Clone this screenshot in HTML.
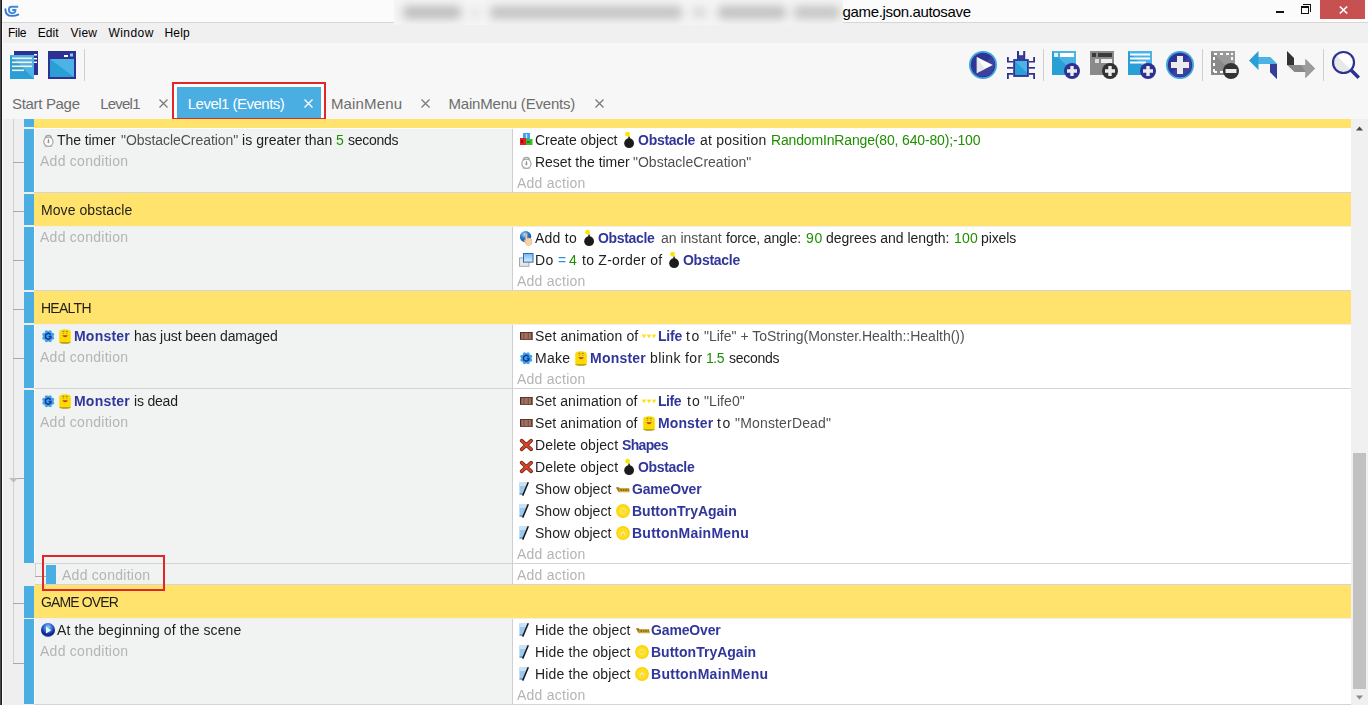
<!DOCTYPE html>
<html><head><meta charset="utf-8">
<style>
*{margin:0;padding:0;box-sizing:border-box}
html,body{width:1368px;height:705px;overflow:hidden;background:#f7f7f7;font-family:"Liberation Sans",sans-serif}
.a{position:absolute}
.t{position:absolute;white-space:pre;line-height:1;font-family:"Liberation Sans",sans-serif}
svg{position:absolute;overflow:visible}
.g{will-change:transform}
</style></head><body>
<!-- title bar -->
<div class="a" style="left:0;top:0;width:1368px;height:22px;background:#fbfbfb"></div>
<div class="a" style="left:0;top:22px;width:1368px;height:1px;background:#d6d6d6"></div>
<div class="a" style="left:0;top:23px;width:1368px;height:20px;background:#f0f0f0"></div>
<!-- blurred title region -->
<div class="a" style="left:394px;top:0;width:449px;height:25px;background:#f5f5f5;overflow:hidden">
  <div class="a" style="left:0;top:0;width:449px;height:25px;filter:blur(5px)">
    <div class="a" style="left:9px;top:6px;width:58px;height:13px;background:#bdbdbd;border-radius:4px"></div>
    <div class="a" style="left:78px;top:9px;width:6px;height:8px;background:#d6d6d6"></div>
    <div class="a" style="left:96px;top:6px;width:192px;height:13px;background:#c2c2c2;border-radius:4px"></div>
    <div class="a" style="left:299px;top:8px;width:13px;height:9px;background:#d2d2d2"></div>
    <div class="a" style="left:324px;top:6px;width:68px;height:13px;background:#c0c0c0;border-radius:4px"></div>
    <div class="a" style="left:400px;top:6px;width:46px;height:13px;background:#c4c4c4;border-radius:4px"></div>
  </div>
</div>
<!-- app logo -->
<svg style="left:0px;top:0px" width="24" height="22" viewBox="0 0 24 22">
  <path d="M18.2 6.7 H11.6 C9.6 6.7 8.9 8.2 8.9 9.8 C8.9 12 10.4 13.2 12.4 13.2 C14.4 13.2 15.4 11.8 15.5 10 H12.2" fill="none" stroke="#3f8ad8" stroke-width="1.9"/>
  <path d="M5.4 9.2 C5.4 13.2 7.8 15.9 12 15.9 C14.6 15.9 16.6 15.4 18.2 14.6" fill="none" stroke="#3478d0" stroke-width="1.9" stroke-linecap="round"/>
</svg>
<!-- window controls -->
<div class="a" style="left:1276px;top:11px;width:8px;height:2px;background:#111"></div>
<div class="a" style="left:1301px;top:6px;width:8px;height:8px;border:1px solid #111;border-top-width:2px"></div>
<div class="a" style="left:1303px;top:4px;width:8px;height:8px;border-top:1px solid #111;border-right:1px solid #111"></div>
<div class="a" style="left:1320px;top:0;width:45px;height:19px;background:#c75050"></div>
<svg style="left:1339px;top:6px" width="9" height="8" viewBox="0 0 9 8"><path d="M0.8 0.5 L8.2 7.5 M8.2 0.5 L0.8 7.5" stroke="#fff" stroke-width="1.7"/></svg>

<!-- toolbar left -->
<svg style="left:10px;top:51px" width="28" height="28" viewBox="0 0 28 28">
  <rect x="4" y="0" width="24" height="24" fill="#2e3192"/>
  <rect x="24" y="3" width="3" height="1.5" fill="#fff"/><rect x="24" y="7" width="3" height="1.5" fill="#fff"/><rect x="24" y="10.5" width="3" height="1.5" fill="#fff"/>
  <rect x="0" y="4" width="24" height="24" fill="#2a9fd6"/>
  <path d="M0 4 H24 V28 Z" fill="#4bb3e6"/>
  <rect x="2" y="6.5" width="20" height="1.6" fill="#fbefe6"/>
  <rect x="2" y="10.5" width="20" height="1.6" fill="#fbefe6"/>
  <rect x="2" y="14.5" width="20" height="1.6" fill="#fbefe6"/>
  <rect x="2" y="18.5" width="12" height="1.6" fill="#fbefe6"/>
</svg>
<svg style="left:48px;top:51px" width="28" height="28" viewBox="0 0 28 28">
  <rect x="0" y="0" width="28" height="28" fill="#2e3192"/>
  <rect x="2" y="8" width="24" height="18" fill="#2a9fd6"/>
  <path d="M2 8 H26 V26 Z" fill="#4bb3e6"/>
  <rect x="16" y="4" width="4" height="2" fill="#fff"/>
  <rect x="22" y="2.5" width="3" height="3" fill="#7fd0f5"/>
</svg>
<div class="a" style="left:84px;top:49px;width:1px;height:32px;background:#cfcfcf"></div>

<!-- toolbar right -->
<svg style="left:969px;top:51px" width="28" height="28" viewBox="0 0 28 28">
  <circle cx="14" cy="14" r="14" fill="#3ca7de"/>
  <circle cx="14" cy="14" r="12.2" fill="#2f3593"/>
  <path d="M22.6 5.4 A12.2 12.2 0 0 1 5.4 22.6 Z" fill="#3d41a0"/>
  <path d="M7.8 5.9 L23.8 14 L7.8 22.1 Z" fill="#fdfdfd"/>
  <path d="M7.8 5.9 L15.8 18 L7.8 22.1 Z" fill="#e4e5e5"/>
</svg>
<svg style="left:1007px;top:51px" width="28" height="28" viewBox="0 0 28 28">
  <path d="M10 0 H12 V4.2 H16.2 V0 H18.2 V8.2 H10 Z" fill="#2e3192"/>
  <rect x="11.6" y="5.4" width="5" height="3" fill="#3b3f9e"/>
  <rect x="6.2" y="8.1" width="15.6" height="17.8" fill="#2e3192"/>
  <rect x="8" y="9.9" width="12" height="14.2" fill="#2a9fd6"/>
  <path d="M8 9.9 H20 V22 Z" fill="#4bb3e6"/>
  <path d="M0 5.9 V11.6 H6.2 V10 H1.8 V5.9 Z M28 5.9 V11.6 H21.8 V10 H26.2 V5.9 Z" fill="#2e3192"/>
  <rect x="0" y="16" width="6.2" height="1.7" fill="#2e3192"/><rect x="21.8" y="16" width="6.2" height="1.7" fill="#2e3192"/>
  <path d="M0 28 V22 H6.2 V23.8 H1.8 V28 Z M28 28 V22 H21.8 V23.8 H26.2 V28 Z" fill="#2e3192"/>
</svg>
<div class="a" style="left:1043px;top:49px;width:1px;height:32px;background:#cfcfcf"></div>
<svg style="left:1052px;top:51px" width="28" height="28" viewBox="0 0 28 28">
  <rect x="0" y="0" width="24" height="24" fill="#2a9fd6"/>
  <path d="M0 0 H24 V24 Z" fill="#4bb3e6"/>
  <rect x="8" y="2" width="14" height="4" fill="#fff"/>
  <rect x="2" y="2" width="4" height="4" fill="#e0f2fb"/>
  <circle cx="20" cy="20" r="8" fill="#2e3192"/>
  <path d="M18.3 15 H21.7 V18.3 H25 V21.7 H21.7 V25 H18.3 V21.7 H15 V18.3 H18.3 Z" fill="#ececec"/>
</svg>
<svg style="left:1090px;top:51px" width="28" height="28" viewBox="0 0 28 28">
  <rect x="0" y="0" width="24" height="24" fill="#8a8a8a"/>
  <rect x="8" y="2" width="14" height="4" fill="#3a3a3a"/>
  <rect x="2" y="2" width="4" height="4" fill="#3a3a3a"/>
  <rect x="11" y="8" width="11" height="4" fill="#eee"/>
  <rect x="5" y="8" width="4" height="4" fill="#ddd"/>
  <circle cx="20" cy="20" r="8" fill="#333"/>
  <path d="M18.3 15 H21.7 V18.3 H25 V21.7 H21.7 V25 H18.3 V21.7 H15 V18.3 H18.3 Z" fill="#ececec"/>
</svg>
<svg style="left:1128px;top:51px" width="28" height="28" viewBox="0 0 28 28">
  <rect x="0" y="0" width="24" height="24" fill="#2a9fd6"/>
  <path d="M0 0 H24 V24 Z" fill="#4bb3e6"/>
  <rect x="2" y="2.5" width="20" height="2" fill="#fff"/>
  <rect x="2" y="6.5" width="20" height="2" fill="#fff"/>
  <rect x="2" y="10.5" width="16" height="2" fill="#fff"/>
  <circle cx="20" cy="20" r="8" fill="#2e3192"/>
  <path d="M18.3 15 H21.7 V18.3 H25 V21.7 H21.7 V25 H18.3 V21.7 H15 V18.3 H18.3 Z" fill="#ececec"/>
</svg>
<svg style="left:1166px;top:51px" width="28" height="28" viewBox="0 0 28 28">
  <circle cx="14" cy="14" r="14" fill="#3ca7de"/>
  <circle cx="14" cy="14" r="12.2" fill="#2f3593"/>
  <path d="M22.6 5.4 A12.2 12.2 0 0 1 5.4 22.6 Z" fill="#3d41a0"/>
  <path d="M11 5 H17 V11 H23 V17 H17 V23 H11 V17 H5 V11 H11 Z" fill="#ececec"/>
</svg>
<div class="a" style="left:1202px;top:49px;width:1px;height:32px;background:#cfcfcf"></div>
<svg style="left:1211px;top:51px" width="28" height="28" viewBox="0 0 28 28">
  <rect x="0" y="0" width="24" height="24" fill="#8a8a8a"/>
  <path d="M0 0 H24 V24 Z" fill="#9a9a9a"/>
  <path d="M3 2 H6 V4 H3 Z M9 2 H12 V4 H9 Z M15 2 H18 V4 H15 Z M20 2 H22 V4 H20 Z" fill="#fff"/>
  <path d="M2 6 H4 V9 H2 Z M2 12 H4 V15 H2 Z M2 18 H4 V21 H2 Z M20 6 H22 V9 H20 Z" fill="#fff"/>
  <path d="M3 20 H6 V22 H3 Z M9 20 H12 V22 H9 Z" fill="#fff"/>
  <circle cx="20" cy="20" r="8" fill="#333"/>
  <rect x="14.5" y="18" width="11" height="4" fill="#ececec"/>
</svg>
<svg style="left:1249px;top:51px" width="28" height="28" viewBox="0 0 28 28">
  <path d="M0 9.5 L9.5 0 V6 H21 L28 13 V28 L21 21 V13 H9.5 V19 Z" fill="#2a9fd6"/>
  <path d="M9.5 6 H21 L28 13 H9.5 Z" fill="#4bb3e6"/>
  <path d="M21 13 H28 V28 L21 21 Z" fill="#373c9a"/>
</svg>
<svg style="left:1287px;top:51px" width="28" height="28" viewBox="0 0 28 28">
  <path d="M0 0 L7 7 V14 H0 Z" fill="#333"/>
  <path d="M0 14 H18.5 V8 L28 17.5 L18.5 27 V21 H7.5 Z" fill="#888"/>
  <path d="M14 14 H18.5 V8 L28 17.5 L18.5 27 V21 Z" fill="#9c9c9c"/>
</svg>
<div class="a" style="left:1323px;top:49px;width:1px;height:32px;background:#cfcfcf"></div>
<svg style="left:1332px;top:51px" width="28" height="28" viewBox="0 0 28 28">
  <circle cx="11.5" cy="11.5" r="10.5" fill="#fff"/>
  <path d="M4.1 4.1 L18.9 18.9 A10.5 10.5 0 0 1 4.1 4.1 Z" fill="#e7e8e8"/>
  <circle cx="11.5" cy="11.5" r="10.5" fill="none" stroke="#2e3192" stroke-width="2.2"/>
  <path d="M18 20.5 L20.5 18 L28 25.5 L25.5 28 Z" fill="#2e3192"/>
</svg>

<!-- tabs -->
<svg style="left:159px;top:99px" width="9" height="9" viewBox="0 0 9 9"><path d="M0.5 0.5 L8.5 8.5 M8.5 0.5 L0.5 8.5" stroke="#777" stroke-width="1.2"/></svg>
<div class="a" style="left:172px;top:82px;width:154px;height:38px;border:2px solid #e0282a;background:#fff"></div>
<div class="a" style="left:177px;top:87px;width:144px;height:31px;background:#4aaee3"></div>
<svg style="left:303.5px;top:98.5px" width="9" height="9" viewBox="0 0 9 9"><path d="M0.5 0.5 L8.5 8.5 M8.5 0.5 L0.5 8.5" stroke="#fff" stroke-width="1.3"/></svg>
<svg style="left:420.5px;top:99px" width="9" height="9" viewBox="0 0 9 9"><path d="M0.5 0.5 L8.5 8.5 M8.5 0.5 L0.5 8.5" stroke="#777" stroke-width="1.2"/></svg>
<svg style="left:594.5px;top:99px" width="9" height="9" viewBox="0 0 9 9"><path d="M0.5 0.5 L8.5 8.5 M8.5 0.5 L0.5 8.5" stroke="#777" stroke-width="1.2"/></svg>

<!-- ============ events area ============ -->
<div class="a" style="left:3px;top:119px;width:1348px;height:586px;background:#efefef"></div>
<!-- tree line -->
<div class="a" style="left:13px;top:119px;width:1px;height:545px;background:#d2d2d2"></div>

<!-- C0 partial -->
<div class="a" style="left:24px;top:119px;width:10px;height:8px;background:#4aaee3"></div>
<div class="a" style="left:34px;top:119px;width:1317px;height:9px;background:#ffe36c"></div>
<div class="a" style="left:34px;top:128px;width:1317px;height:1px;background:#fff"></div>

<!-- <div class="a" style="left:34px;top:129px;width:1px;height:63px;background:#fff"></div>
<div class="a" style="left:35px;top:129px;width:477px;height:63px;background:#f1f2f2"></div>
<div class="a" style="left:512px;top:129px;width:1px;height:63px;background:#cfcfcf"></div>
<div class="a" style="left:513px;top:129px;width:838px;height:63px;background:#fff"></div>
<div class="a" style="left:34px;top:192px;width:1317px;height:1px;background:#d4d4d4"></div>
<div class="a" style="left:24px;top:129px;width:10px;height:63px;background:#4aaee3"></div>
<div class="a" style="left:13px;top:162px;width:11px;height:1px;background:#a9a9a9"></div>
<div class="a" style="left:34px;top:193px;width:1317px;height:33px;background:#ffe36c"></div>
<div class="a" style="left:24px;top:194px;width:10px;height:31px;background:#4aaee3"></div>
<div class="a" style="left:13px;top:211px;width:11px;height:1px;background:#a9a9a9"></div>
<div class="a" style="left:34px;top:227px;width:1px;height:63px;background:#fff"></div>
<div class="a" style="left:35px;top:227px;width:477px;height:63px;background:#f1f2f2"></div>
<div class="a" style="left:512px;top:227px;width:1px;height:63px;background:#cfcfcf"></div>
<div class="a" style="left:513px;top:227px;width:838px;height:63px;background:#fff"></div>
<div class="a" style="left:34px;top:290px;width:1317px;height:1px;background:#d4d4d4"></div>
<div class="a" style="left:24px;top:227px;width:10px;height:63px;background:#4aaee3"></div>
<div class="a" style="left:13px;top:260px;width:11px;height:1px;background:#a9a9a9"></div>
<div class="a" style="left:34px;top:291px;width:1317px;height:33px;background:#ffe36c"></div>
<div class="a" style="left:24px;top:292px;width:10px;height:31px;background:#4aaee3"></div>
<div class="a" style="left:13px;top:309px;width:11px;height:1px;background:#a9a9a9"></div>
<div class="a" style="left:34px;top:325px;width:1px;height:63px;background:#fff"></div>
<div class="a" style="left:35px;top:325px;width:477px;height:63px;background:#f1f2f2"></div>
<div class="a" style="left:512px;top:325px;width:1px;height:63px;background:#cfcfcf"></div>
<div class="a" style="left:513px;top:325px;width:838px;height:63px;background:#fff"></div>
<div class="a" style="left:34px;top:388px;width:1317px;height:1px;background:#d4d4d4"></div>
<div class="a" style="left:24px;top:325px;width:10px;height:63px;background:#4aaee3"></div>
<div class="a" style="left:13px;top:358px;width:11px;height:1px;background:#a9a9a9"></div>
<div class="a" style="left:34px;top:389px;width:1px;height:174px;background:#fff"></div>
<div class="a" style="left:35px;top:389px;width:477px;height:174px;background:#f1f2f2"></div>
<div class="a" style="left:512px;top:389px;width:1px;height:174px;background:#cfcfcf"></div>
<div class="a" style="left:513px;top:389px;width:838px;height:174px;background:#fff"></div>
<div class="a" style="left:34px;top:563px;width:1317px;height:1px;background:#d4d4d4"></div>
<div class="a" style="left:24px;top:390px;width:10px;height:173px;background:#4aaee3"></div>
<div class="a" style="left:13px;top:478px;width:11px;height:1px;background:#a9a9a9"></div>
<svg style="left:9px;top:478px" width="9" height="5" viewBox="0 0 9 5"><path d="M0 0 H9 L4.5 4.5 Z" fill="#bdbdbd"/></svg>
<div class="a" style="left:35px;top:564px;width:477px;height:21px;background:#f1f2f2"></div>
<div class="a" style="left:512px;top:564px;width:1px;height:21px;background:#cfcfcf"></div>
<div class="a" style="left:513px;top:564px;width:838px;height:21px;background:#fff"></div>
<div class="a" style="left:34px;top:563px;width:1317px;height:1px;background:#d4d4d4"></div>
<div class="a" style="left:35px;top:584px;width:1316px;height:1px;background:#d4d4d4"></div>
<div class="a" style="left:35px;top:564px;width:1px;height:12px;background:#cfcfcf"></div>
<div class="a" style="left:35px;top:576px;width:11px;height:1px;background:#a9a9a9"></div>
<div class="a" style="left:46px;top:565px;width:10px;height:19px;background:#4aaee3"></div>
<div class="a" style="left:34px;top:585px;width:1317px;height:33px;background:#ffe36c"></div>
<div class="a" style="left:24px;top:586px;width:10px;height:32px;background:#4aaee3"></div>
<div class="a" style="left:13px;top:603px;width:11px;height:1px;background:#a9a9a9"></div>
<div class="a" style="left:34px;top:619px;width:1px;height:85px;background:#fff"></div>
<div class="a" style="left:35px;top:619px;width:477px;height:85px;background:#f1f2f2"></div>
<div class="a" style="left:512px;top:619px;width:1px;height:85px;background:#cfcfcf"></div>
<div class="a" style="left:513px;top:619px;width:838px;height:85px;background:#fff"></div>
<div class="a" style="left:34px;top:704px;width:1317px;height:1px;background:#d4d4d4"></div>
<div class="a" style="left:24px;top:619px;width:10px;height:85px;background:#4aaee3"></div>
<div class="a" style="left:13px;top:663px;width:11px;height:1px;background:#a9a9a9"></div>
<svg style="left:42.5px;top:132.5px" width="11" height="14" viewBox="0 0 11 14"><path d="M2.4 5.4 C2.2 1.4 8.6 1.4 8.4 5.4" fill="none" stroke="#a4a4a4" stroke-width="1.4"/><circle cx="5.4" cy="8.7" r="4.6" fill="#fdfdfd" stroke="#a6a6a6" stroke-width="1.2"/><path d="M5.4 6.2 V10.2" stroke="#6a6a6a" stroke-width="0.9"/><path d="M3.8 9 H7" stroke="#d8a070" stroke-width="0.8"/><path d="M2 13.8 L3.2 12.2 M8.8 13.8 L7.6 12.2" stroke="#b0b0b0" stroke-width="1"/></svg>
<svg style="left:519.5px;top:133px" width="13" height="12" viewBox="0 0 13 12"><rect x="3" y="0" width="7" height="6" fill="#3fa6ee"/><rect x="5.8" y="1" width="1.4" height="4" fill="#bfe6ff"/><rect x="0" y="5" width="6" height="7" fill="#e02020"/><rect x="1" y="7" width="2" height="3" fill="#a00"/><rect x="6" y="6" width="6.5" height="6" fill="#3cbf2c"/><rect x="7" y="8" width="3" height="2" fill="#1f8a18"/></svg>
<svg style="left:624px;top:132px" width="11" height="16" viewBox="0 0 11 16"><circle cx="3.6" cy="2.2" r="2.4" fill="#ffe400"/><rect x="4.2" y="4.6" width="1.8" height="2.4" fill="#4a3a30"/><circle cx="5.1" cy="11.2" r="4.9" fill="#1b1b1b"/></svg>
<svg style="left:520.5px;top:154.5px" width="11" height="14" viewBox="0 0 11 14"><path d="M2.4 5.4 C2.2 1.4 8.6 1.4 8.4 5.4" fill="none" stroke="#a4a4a4" stroke-width="1.4"/><circle cx="5.4" cy="8.7" r="4.6" fill="#fdfdfd" stroke="#a6a6a6" stroke-width="1.2"/><path d="M5.4 6.2 V10.2" stroke="#6a6a6a" stroke-width="0.9"/><path d="M3.8 9 H7" stroke="#d8a070" stroke-width="0.8"/><path d="M2 13.8 L3.2 12.2 M8.8 13.8 L7.6 12.2" stroke="#b0b0b0" stroke-width="1"/></svg>
<svg style="left:520px;top:231px" width="13" height="15" viewBox="0 0 13 15"><defs><radialGradient id="gf" cx="0.4" cy="0.3" r="0.7"><stop offset="0" stop-color="#a8dcff"/><stop offset="0.5" stop-color="#2878d0"/><stop offset="0.85" stop-color="#1a58b0"/><stop offset="1" stop-color="#9ac0e8"/></radialGradient></defs><circle cx="5.6" cy="5.8" r="5.7" fill="url(#gf)"/><path d="M5.6 3 C5.6 2.2 7 2.2 7 3 V7.4 C8.4 6.8 10.8 7.2 11.4 8.2 L11.8 11.8 C11.4 13.6 10 14.6 8.2 14.4 C6.6 14.2 5.4 12.8 5 11.4 L4.2 9.2 C4.4 8.6 5.2 8.8 5.6 9.4 Z" fill="#f6d2a6" stroke="#e0a880" stroke-width="0.6"/></svg>
<svg style="left:584px;top:230px" width="11" height="16" viewBox="0 0 11 16"><circle cx="3.6" cy="2.2" r="2.4" fill="#ffe400"/><rect x="4.2" y="4.6" width="1.8" height="2.4" fill="#4a3a30"/><circle cx="5.1" cy="11.2" r="4.9" fill="#1b1b1b"/></svg>
<svg style="left:519px;top:253px" width="15" height="14" viewBox="0 0 15 14"><rect x="0.5" y="4.9" width="9.4" height="8.4" fill="#e6e6e6" stroke="#a8a8a8" stroke-width="1"/><defs><linearGradient id="gz" x1="0" y1="0" x2="0" y2="1"><stop offset="0" stop-color="#6fb8f0"/><stop offset="1" stop-color="#dff0ff"/></linearGradient></defs><rect x="4.5" y="0.5" width="9.5" height="8.6" fill="url(#gz)" stroke="#2a6cc0" stroke-width="1"/></svg>
<svg style="left:669px;top:252px" width="11" height="16" viewBox="0 0 11 16"><circle cx="3.6" cy="2.2" r="2.4" fill="#ffe400"/><rect x="4.2" y="4.6" width="1.8" height="2.4" fill="#4a3a30"/><circle cx="5.1" cy="11.2" r="4.9" fill="#1b1b1b"/></svg>
<svg style="left:41.7px;top:329.7px" width="13" height="13" viewBox="0 0 13 13"><circle cx="6.25" cy="6.25" r="5" fill="#3aa8e8"/><circle cx="10.50" cy="8.01" r="1.75" fill="#3aa8e8"/><circle cx="8.01" cy="10.50" r="1.75" fill="#3aa8e8"/><circle cx="4.49" cy="10.50" r="1.75" fill="#3aa8e8"/><circle cx="2.00" cy="8.01" r="1.75" fill="#3aa8e8"/><circle cx="2.00" cy="4.49" r="1.75" fill="#3aa8e8"/><circle cx="4.49" cy="2.00" r="1.75" fill="#3aa8e8"/><circle cx="8.01" cy="2.00" r="1.75" fill="#3aa8e8"/><circle cx="10.50" cy="4.49" r="1.75" fill="#3aa8e8"/><path d="M8.9 4.6 L6.25 3.1 L3.6 4.6 V7.9 L6.25 9.4 L8.9 7.9 V6.4 H6.6" fill="none" stroke="#2a2e96" stroke-width="1.5"/></svg>
<svg style="left:59px;top:328px" width="12" height="16" viewBox="0 0 12 16"><path d="M0.2 4 C0.2 0.2 11.8 0.2 11.8 4 V14.4 C11.8 16 0.2 16 0.2 14.4 Z" fill="#fbdc00"/><path d="M0.6 14.4 H11.4 V14.8 C11.4 15.8 0.6 15.8 0.6 14.8 Z" fill="#8a6a30"/><rect x="3.4" y="2.8" width="2" height="1" fill="#a87a10"/><rect x="6.8" y="2.8" width="2" height="1" fill="#a87a10"/><circle cx="4.4" cy="5.2" r="0.6" fill="#8a8aa8"/><circle cx="7.8" cy="5.2" r="0.6" fill="#8a8aa8"/><path d="M3.4 7.2 C4.4 9.8 7.8 9.8 8.8 7.2 Z" fill="#c83a30"/></svg>
<svg style="left:519.5px;top:332.3px" width="13" height="8" viewBox="0 0 13 8"><rect x="0" y="0" width="12.5" height="8" fill="#a07060"/><rect x="0" y="0" width="1.2" height="8" fill="#4a2a20"/><rect x="11.3" y="0" width="1.2" height="8" fill="#4a2a20"/><rect x="3.5" y="0" width="0.9" height="8" fill="#7a4a3a"/><rect x="7.8" y="0" width="0.9" height="8" fill="#7a4a3a"/><rect x="0" y="0" width="12.5" height="1" fill="#5a3a30"/><rect x="0" y="7" width="12.5" height="1" fill="#6a4a40"/></svg>
<svg style="left:641.8px;top:333.5px" width="15" height="5" viewBox="0 0 15 5"><path d="M2 4.2 L0.2 1.8 C-0.2 0.4 1.4 -0.2 2 1 C2.6 -0.2 4.2 0.4 3.8 1.8 Z" fill="#ffe21a"/><path d="M7 4.2 L5.2 1.8 C4.8 0.4 6.4 -0.2 7 1 C7.6 -0.2 9.2 0.4 8.8 1.8 Z" fill="#ffe21a"/><path d="M12 4.2 L10.2 1.8 C9.8 0.4 11.4 -0.2 12 1 C12.6 -0.2 14.2 0.4 13.8 1.8 Z" fill="#ffe21a"/></svg>
<svg style="left:519.8px;top:351.8px" width="13" height="13" viewBox="0 0 13 13"><circle cx="6.25" cy="6.25" r="5" fill="#3aa8e8"/><circle cx="10.50" cy="8.01" r="1.75" fill="#3aa8e8"/><circle cx="8.01" cy="10.50" r="1.75" fill="#3aa8e8"/><circle cx="4.49" cy="10.50" r="1.75" fill="#3aa8e8"/><circle cx="2.00" cy="8.01" r="1.75" fill="#3aa8e8"/><circle cx="2.00" cy="4.49" r="1.75" fill="#3aa8e8"/><circle cx="4.49" cy="2.00" r="1.75" fill="#3aa8e8"/><circle cx="8.01" cy="2.00" r="1.75" fill="#3aa8e8"/><circle cx="10.50" cy="4.49" r="1.75" fill="#3aa8e8"/><path d="M8.9 4.6 L6.25 3.1 L3.6 4.6 V7.9 L6.25 9.4 L8.9 7.9 V6.4 H6.6" fill="none" stroke="#2a2e96" stroke-width="1.5"/></svg>
<svg style="left:574.5px;top:350px" width="12" height="16" viewBox="0 0 12 16"><path d="M0.2 4 C0.2 0.2 11.8 0.2 11.8 4 V14.4 C11.8 16 0.2 16 0.2 14.4 Z" fill="#fbdc00"/><path d="M0.6 14.4 H11.4 V14.8 C11.4 15.8 0.6 15.8 0.6 14.8 Z" fill="#8a6a30"/><rect x="3.4" y="2.8" width="2" height="1" fill="#a87a10"/><rect x="6.8" y="2.8" width="2" height="1" fill="#a87a10"/><circle cx="4.4" cy="5.2" r="0.6" fill="#8a8aa8"/><circle cx="7.8" cy="5.2" r="0.6" fill="#8a8aa8"/><path d="M3.4 7.2 C4.4 9.8 7.8 9.8 8.8 7.2 Z" fill="#c83a30"/></svg>
<svg style="left:41.7px;top:394.7px" width="13" height="13" viewBox="0 0 13 13"><circle cx="6.25" cy="6.25" r="5" fill="#3aa8e8"/><circle cx="10.50" cy="8.01" r="1.75" fill="#3aa8e8"/><circle cx="8.01" cy="10.50" r="1.75" fill="#3aa8e8"/><circle cx="4.49" cy="10.50" r="1.75" fill="#3aa8e8"/><circle cx="2.00" cy="8.01" r="1.75" fill="#3aa8e8"/><circle cx="2.00" cy="4.49" r="1.75" fill="#3aa8e8"/><circle cx="4.49" cy="2.00" r="1.75" fill="#3aa8e8"/><circle cx="8.01" cy="2.00" r="1.75" fill="#3aa8e8"/><circle cx="10.50" cy="4.49" r="1.75" fill="#3aa8e8"/><path d="M8.9 4.6 L6.25 3.1 L3.6 4.6 V7.9 L6.25 9.4 L8.9 7.9 V6.4 H6.6" fill="none" stroke="#2a2e96" stroke-width="1.5"/></svg>
<svg style="left:59px;top:393px" width="12" height="16" viewBox="0 0 12 16"><path d="M0.2 4 C0.2 0.2 11.8 0.2 11.8 4 V14.4 C11.8 16 0.2 16 0.2 14.4 Z" fill="#fbdc00"/><path d="M0.6 14.4 H11.4 V14.8 C11.4 15.8 0.6 15.8 0.6 14.8 Z" fill="#8a6a30"/><rect x="3.4" y="2.8" width="2" height="1" fill="#a87a10"/><rect x="6.8" y="2.8" width="2" height="1" fill="#a87a10"/><circle cx="4.4" cy="5.2" r="0.6" fill="#8a8aa8"/><circle cx="7.8" cy="5.2" r="0.6" fill="#8a8aa8"/><path d="M3.4 7.2 C4.4 9.8 7.8 9.8 8.8 7.2 Z" fill="#c83a30"/></svg>
<svg style="left:519.5px;top:397.3px" width="13" height="8" viewBox="0 0 13 8"><rect x="0" y="0" width="12.5" height="8" fill="#a07060"/><rect x="0" y="0" width="1.2" height="8" fill="#4a2a20"/><rect x="11.3" y="0" width="1.2" height="8" fill="#4a2a20"/><rect x="3.5" y="0" width="0.9" height="8" fill="#7a4a3a"/><rect x="7.8" y="0" width="0.9" height="8" fill="#7a4a3a"/><rect x="0" y="0" width="12.5" height="1" fill="#5a3a30"/><rect x="0" y="7" width="12.5" height="1" fill="#6a4a40"/></svg>
<svg style="left:641.8px;top:398.5px" width="15" height="5" viewBox="0 0 15 5"><path d="M2 4.2 L0.2 1.8 C-0.2 0.4 1.4 -0.2 2 1 C2.6 -0.2 4.2 0.4 3.8 1.8 Z" fill="#ffe21a"/><path d="M7 4.2 L5.2 1.8 C4.8 0.4 6.4 -0.2 7 1 C7.6 -0.2 9.2 0.4 8.8 1.8 Z" fill="#ffe21a"/><path d="M12 4.2 L10.2 1.8 C9.8 0.4 11.4 -0.2 12 1 C12.6 -0.2 14.2 0.4 13.8 1.8 Z" fill="#ffe21a"/></svg>
<svg style="left:519.5px;top:419.3px" width="13" height="8" viewBox="0 0 13 8"><rect x="0" y="0" width="12.5" height="8" fill="#a07060"/><rect x="0" y="0" width="1.2" height="8" fill="#4a2a20"/><rect x="11.3" y="0" width="1.2" height="8" fill="#4a2a20"/><rect x="3.5" y="0" width="0.9" height="8" fill="#7a4a3a"/><rect x="7.8" y="0" width="0.9" height="8" fill="#7a4a3a"/><rect x="0" y="0" width="12.5" height="1" fill="#5a3a30"/><rect x="0" y="7" width="12.5" height="1" fill="#6a4a40"/></svg>
<svg style="left:643px;top:415px" width="12" height="16" viewBox="0 0 12 16"><path d="M0.2 4 C0.2 0.2 11.8 0.2 11.8 4 V14.4 C11.8 16 0.2 16 0.2 14.4 Z" fill="#fbdc00"/><path d="M0.6 14.4 H11.4 V14.8 C11.4 15.8 0.6 15.8 0.6 14.8 Z" fill="#8a6a30"/><rect x="3.4" y="2.8" width="2" height="1" fill="#a87a10"/><rect x="6.8" y="2.8" width="2" height="1" fill="#a87a10"/><circle cx="4.4" cy="5.2" r="0.6" fill="#8a8aa8"/><circle cx="7.8" cy="5.2" r="0.6" fill="#8a8aa8"/><path d="M3.4 7.2 C4.4 9.8 7.8 9.8 8.8 7.2 Z" fill="#c83a30"/></svg>
<svg style="left:519.8px;top:439.1px" width="13" height="12" viewBox="0 0 13 12"><path d="M1.6 1.6 L11.2 10.4 M11.2 1.6 L1.6 10.4" stroke="#5a1c12" stroke-width="3.6" stroke-linecap="round"/><path d="M1.6 1.6 L11.2 10.4 M11.2 1.6 L1.6 10.4" stroke="#d8442a" stroke-width="2.3" stroke-linecap="round"/></svg>
<svg style="left:519.8px;top:461.1px" width="13" height="12" viewBox="0 0 13 12"><path d="M1.6 1.6 L11.2 10.4 M11.2 1.6 L1.6 10.4" stroke="#5a1c12" stroke-width="3.6" stroke-linecap="round"/><path d="M1.6 1.6 L11.2 10.4 M11.2 1.6 L1.6 10.4" stroke="#d8442a" stroke-width="2.3" stroke-linecap="round"/></svg>
<svg style="left:623.5px;top:459px" width="11" height="16" viewBox="0 0 11 16"><circle cx="3.6" cy="2.2" r="2.4" fill="#ffe400"/><rect x="4.2" y="4.6" width="1.8" height="2.4" fill="#4a3a30"/><circle cx="5.1" cy="11.2" r="4.9" fill="#1b1b1b"/></svg>
<svg style="left:519px;top:482.3px" width="11" height="14" viewBox="0 0 11 14"><path d="M0.3 0.6 H8.6 L4.4 12.6 H0.5 Z" fill="#9cc8ec"/><path d="M0.3 0.6 H8.6 L7.4 4 H0.4 Z" fill="#c8e2f6"/><path d="M0.5 11.4 H4.6 L4.4 12.6 H0.5 Z" fill="#3a78c0"/><path d="M9.3 0.3 L3.7 13.6" stroke="#151515" stroke-width="1.5"/></svg>
<svg style="left:616px;top:486.5px" width="14" height="6" viewBox="0 0 14 6"><path d="M0 0.6 L2.4 0.2 L3.4 1 H13.2 L13.8 5.2 H3.2 L2.2 4.2 Z" fill="#d4aa3a"/><path d="M0 0.6 L2.4 0.2 L3.4 1 L3.2 5.2 L2.2 4.2 Z" fill="#a07820"/><rect x="4.4" y="2" width="1.6" height="2" fill="#8a6a18"/><rect x="6.8" y="2" width="1.6" height="2" fill="#8a6a18"/><rect x="9.2" y="2" width="1.6" height="2" fill="#8a6a18"/><rect x="11.6" y="2" width="1.2" height="2" fill="#8a6a18"/></svg>
<svg style="left:519px;top:504.3px" width="11" height="14" viewBox="0 0 11 14"><path d="M0.3 0.6 H8.6 L4.4 12.6 H0.5 Z" fill="#9cc8ec"/><path d="M0.3 0.6 H8.6 L7.4 4 H0.4 Z" fill="#c8e2f6"/><path d="M0.5 11.4 H4.6 L4.4 12.6 H0.5 Z" fill="#3a78c0"/><path d="M9.3 0.3 L3.7 13.6" stroke="#151515" stroke-width="1.5"/></svg>
<svg style="left:616px;top:504px" width="14" height="14" viewBox="0 0 14 14"><circle cx="7" cy="7" r="6.9" fill="#fcd20c"/><circle cx="7" cy="7" r="5.6" fill="#ffde1c"/><circle cx="7" cy="7" r="2.6" fill="none" stroke="#f6e890" stroke-width="1"/></svg>
<svg style="left:519px;top:526.3px" width="11" height="14" viewBox="0 0 11 14"><path d="M0.3 0.6 H8.6 L4.4 12.6 H0.5 Z" fill="#9cc8ec"/><path d="M0.3 0.6 H8.6 L7.4 4 H0.4 Z" fill="#c8e2f6"/><path d="M0.5 11.4 H4.6 L4.4 12.6 H0.5 Z" fill="#3a78c0"/><path d="M9.3 0.3 L3.7 13.6" stroke="#151515" stroke-width="1.5"/></svg>
<svg style="left:616px;top:526px" width="14" height="14" viewBox="0 0 14 14"><circle cx="7" cy="7" r="6.9" fill="#fcd20c"/><circle cx="7" cy="7" r="5.6" fill="#ffde1c"/><path d="M4.6 9.6 V7 L7 4.8 L9.4 7 V9.6 Z" fill="#f6eaa0"/><rect x="6.3" y="7.6" width="1.4" height="2" fill="#f0c800"/></svg>
<svg style="left:41px;top:623px" width="14" height="14" viewBox="0 0 14 14"><defs><radialGradient id="gg" cx="0.5" cy="0.3" r="0.7"><stop offset="0" stop-color="#9ad0ff"/><stop offset="0.45" stop-color="#2a6ad0"/><stop offset="0.8" stop-color="#0a1a80"/><stop offset="1" stop-color="#3a70d0"/></radialGradient></defs><circle cx="7" cy="7" r="7" fill="url(#gg)"/><path d="M5 3.8 L10.4 7.2 L5 10.6 Z" fill="#f4f4f4"/></svg>
<svg style="left:519px;top:623.3px" width="11" height="14" viewBox="0 0 11 14"><path d="M0.3 0.6 H8.6 L4.4 12.6 H0.5 Z" fill="#9cc8ec"/><path d="M0.3 0.6 H8.6 L7.4 4 H0.4 Z" fill="#c8e2f6"/><path d="M0.5 11.4 H4.6 L4.4 12.6 H0.5 Z" fill="#3a78c0"/><path d="M9.3 0.3 L3.7 13.6" stroke="#151515" stroke-width="1.5"/></svg>
<svg style="left:635.5px;top:627.5px" width="14" height="6" viewBox="0 0 14 6"><path d="M0 0.6 L2.4 0.2 L3.4 1 H13.2 L13.8 5.2 H3.2 L2.2 4.2 Z" fill="#d4aa3a"/><path d="M0 0.6 L2.4 0.2 L3.4 1 L3.2 5.2 L2.2 4.2 Z" fill="#a07820"/><rect x="4.4" y="2" width="1.6" height="2" fill="#8a6a18"/><rect x="6.8" y="2" width="1.6" height="2" fill="#8a6a18"/><rect x="9.2" y="2" width="1.6" height="2" fill="#8a6a18"/><rect x="11.6" y="2" width="1.2" height="2" fill="#8a6a18"/></svg>
<svg style="left:519px;top:645.3px" width="11" height="14" viewBox="0 0 11 14"><path d="M0.3 0.6 H8.6 L4.4 12.6 H0.5 Z" fill="#9cc8ec"/><path d="M0.3 0.6 H8.6 L7.4 4 H0.4 Z" fill="#c8e2f6"/><path d="M0.5 11.4 H4.6 L4.4 12.6 H0.5 Z" fill="#3a78c0"/><path d="M9.3 0.3 L3.7 13.6" stroke="#151515" stroke-width="1.5"/></svg>
<svg style="left:635px;top:645px" width="14" height="14" viewBox="0 0 14 14"><circle cx="7" cy="7" r="6.9" fill="#fcd20c"/><circle cx="7" cy="7" r="5.6" fill="#ffde1c"/><circle cx="7" cy="7" r="2.6" fill="none" stroke="#f6e890" stroke-width="1"/></svg>
<svg style="left:519px;top:667.3px" width="11" height="14" viewBox="0 0 11 14"><path d="M0.3 0.6 H8.6 L4.4 12.6 H0.5 Z" fill="#9cc8ec"/><path d="M0.3 0.6 H8.6 L7.4 4 H0.4 Z" fill="#c8e2f6"/><path d="M0.5 11.4 H4.6 L4.4 12.6 H0.5 Z" fill="#3a78c0"/><path d="M9.3 0.3 L3.7 13.6" stroke="#151515" stroke-width="1.5"/></svg>
<svg style="left:635px;top:667px" width="14" height="14" viewBox="0 0 14 14"><circle cx="7" cy="7" r="6.9" fill="#fcd20c"/><circle cx="7" cy="7" r="5.6" fill="#ffde1c"/><path d="M4.6 9.6 V7 L7 4.8 L9.4 7 V9.6 Z" fill="#f6eaa0"/><rect x="6.3" y="7.6" width="1.4" height="2" fill="#f0c800"/></svg>_PLACEHOLDER -->
<div class="a" style="left:34px;top:129px;width:1px;height:63px;background:#fff"></div>
<div class="a" style="left:35px;top:129px;width:477px;height:63px;background:#f1f2f2"></div>
<div class="a" style="left:512px;top:129px;width:1px;height:63px;background:#cfcfcf"></div>
<div class="a" style="left:513px;top:129px;width:838px;height:63px;background:#fff"></div>
<div class="a" style="left:34px;top:192px;width:1317px;height:1px;background:#d4d4d4"></div>
<div class="a" style="left:24px;top:129px;width:10px;height:63px;background:#4aaee3"></div>
<div class="a" style="left:13px;top:162px;width:11px;height:1px;background:#a9a9a9"></div>
<div class="a" style="left:34px;top:193px;width:1317px;height:33px;background:#ffe36c"></div>
<div class="a" style="left:24px;top:194px;width:10px;height:31px;background:#4aaee3"></div>
<div class="a" style="left:13px;top:211px;width:11px;height:1px;background:#a9a9a9"></div>
<div class="a" style="left:34px;top:227px;width:1px;height:63px;background:#fff"></div>
<div class="a" style="left:35px;top:227px;width:477px;height:63px;background:#f1f2f2"></div>
<div class="a" style="left:512px;top:227px;width:1px;height:63px;background:#cfcfcf"></div>
<div class="a" style="left:513px;top:227px;width:838px;height:63px;background:#fff"></div>
<div class="a" style="left:34px;top:290px;width:1317px;height:1px;background:#d4d4d4"></div>
<div class="a" style="left:24px;top:227px;width:10px;height:63px;background:#4aaee3"></div>
<div class="a" style="left:13px;top:260px;width:11px;height:1px;background:#a9a9a9"></div>
<div class="a" style="left:34px;top:291px;width:1317px;height:33px;background:#ffe36c"></div>
<div class="a" style="left:24px;top:292px;width:10px;height:31px;background:#4aaee3"></div>
<div class="a" style="left:13px;top:309px;width:11px;height:1px;background:#a9a9a9"></div>
<div class="a" style="left:34px;top:325px;width:1px;height:63px;background:#fff"></div>
<div class="a" style="left:35px;top:325px;width:477px;height:63px;background:#f1f2f2"></div>
<div class="a" style="left:512px;top:325px;width:1px;height:63px;background:#cfcfcf"></div>
<div class="a" style="left:513px;top:325px;width:838px;height:63px;background:#fff"></div>
<div class="a" style="left:34px;top:388px;width:1317px;height:1px;background:#d4d4d4"></div>
<div class="a" style="left:24px;top:325px;width:10px;height:63px;background:#4aaee3"></div>
<div class="a" style="left:13px;top:358px;width:11px;height:1px;background:#a9a9a9"></div>
<div class="a" style="left:34px;top:389px;width:1px;height:174px;background:#fff"></div>
<div class="a" style="left:35px;top:389px;width:477px;height:174px;background:#f1f2f2"></div>
<div class="a" style="left:512px;top:389px;width:1px;height:174px;background:#cfcfcf"></div>
<div class="a" style="left:513px;top:389px;width:838px;height:174px;background:#fff"></div>
<div class="a" style="left:34px;top:563px;width:1317px;height:1px;background:#d4d4d4"></div>
<div class="a" style="left:24px;top:390px;width:10px;height:173px;background:#4aaee3"></div>
<div class="a" style="left:13px;top:478px;width:11px;height:1px;background:#a9a9a9"></div>
<svg style="left:9px;top:478px" width="9" height="5" viewBox="0 0 9 5"><path d="M0 0 H9 L4.5 4.5 Z" fill="#bdbdbd"/></svg>
<div class="a" style="left:35px;top:564px;width:477px;height:21px;background:#f1f2f2"></div>
<div class="a" style="left:512px;top:564px;width:1px;height:21px;background:#cfcfcf"></div>
<div class="a" style="left:513px;top:564px;width:838px;height:21px;background:#fff"></div>
<div class="a" style="left:34px;top:563px;width:1317px;height:1px;background:#d4d4d4"></div>
<div class="a" style="left:35px;top:584px;width:1316px;height:1px;background:#d4d4d4"></div>
<div class="a" style="left:35px;top:564px;width:1px;height:12px;background:#cfcfcf"></div>
<div class="a" style="left:35px;top:576px;width:11px;height:1px;background:#a9a9a9"></div>
<div class="a" style="left:46px;top:565px;width:10px;height:19px;background:#4aaee3"></div>
<div class="a" style="left:34px;top:585px;width:1317px;height:33px;background:#ffe36c"></div>
<div class="a" style="left:24px;top:586px;width:10px;height:32px;background:#4aaee3"></div>
<div class="a" style="left:13px;top:603px;width:11px;height:1px;background:#a9a9a9"></div>
<div class="a" style="left:34px;top:619px;width:1px;height:85px;background:#fff"></div>
<div class="a" style="left:35px;top:619px;width:477px;height:85px;background:#f1f2f2"></div>
<div class="a" style="left:512px;top:619px;width:1px;height:85px;background:#cfcfcf"></div>
<div class="a" style="left:513px;top:619px;width:838px;height:85px;background:#fff"></div>
<div class="a" style="left:34px;top:704px;width:1317px;height:1px;background:#d4d4d4"></div>
<div class="a" style="left:24px;top:619px;width:10px;height:85px;background:#4aaee3"></div>
<div class="a" style="left:13px;top:663px;width:11px;height:1px;background:#a9a9a9"></div>
<svg style="left:42.5px;top:132.5px" width="11" height="14" viewBox="0 0 11 14"><path d="M2.4 5.4 C2.2 1.4 8.6 1.4 8.4 5.4" fill="none" stroke="#a4a4a4" stroke-width="1.4"/><circle cx="5.4" cy="8.7" r="4.6" fill="#fdfdfd" stroke="#a6a6a6" stroke-width="1.2"/><path d="M5.4 6.2 V10.2" stroke="#6a6a6a" stroke-width="0.9"/><path d="M3.8 9 H7" stroke="#d8a070" stroke-width="0.8"/><path d="M2 13.8 L3.2 12.2 M8.8 13.8 L7.6 12.2" stroke="#b0b0b0" stroke-width="1"/></svg>
<svg style="left:519.5px;top:133px" width="13" height="12" viewBox="0 0 13 12"><rect x="3" y="0" width="7" height="6" fill="#3fa6ee"/><rect x="5.8" y="1" width="1.4" height="4" fill="#bfe6ff"/><rect x="0" y="5" width="6" height="7" fill="#e02020"/><rect x="1" y="7" width="2" height="3" fill="#a00"/><rect x="6" y="6" width="6.5" height="6" fill="#3cbf2c"/><rect x="7" y="8" width="3" height="2" fill="#1f8a18"/></svg>
<svg style="left:624px;top:132px" width="11" height="16" viewBox="0 0 11 16"><circle cx="3.6" cy="2.2" r="2.4" fill="#ffe400"/><rect x="4.2" y="4.6" width="1.8" height="2.4" fill="#4a3a30"/><circle cx="5.1" cy="11.2" r="4.9" fill="#1b1b1b"/></svg>
<svg style="left:520.5px;top:154.5px" width="11" height="14" viewBox="0 0 11 14"><path d="M2.4 5.4 C2.2 1.4 8.6 1.4 8.4 5.4" fill="none" stroke="#a4a4a4" stroke-width="1.4"/><circle cx="5.4" cy="8.7" r="4.6" fill="#fdfdfd" stroke="#a6a6a6" stroke-width="1.2"/><path d="M5.4 6.2 V10.2" stroke="#6a6a6a" stroke-width="0.9"/><path d="M3.8 9 H7" stroke="#d8a070" stroke-width="0.8"/><path d="M2 13.8 L3.2 12.2 M8.8 13.8 L7.6 12.2" stroke="#b0b0b0" stroke-width="1"/></svg>
<svg style="left:520px;top:231px" width="13" height="15" viewBox="0 0 13 15"><defs><radialGradient id="gf" cx="0.4" cy="0.3" r="0.7"><stop offset="0" stop-color="#a8dcff"/><stop offset="0.5" stop-color="#2878d0"/><stop offset="0.85" stop-color="#1a58b0"/><stop offset="1" stop-color="#9ac0e8"/></radialGradient></defs><circle cx="5.6" cy="5.8" r="5.7" fill="url(#gf)"/><path d="M5.6 3 C5.6 2.2 7 2.2 7 3 V7.4 C8.4 6.8 10.8 7.2 11.4 8.2 L11.8 11.8 C11.4 13.6 10 14.6 8.2 14.4 C6.6 14.2 5.4 12.8 5 11.4 L4.2 9.2 C4.4 8.6 5.2 8.8 5.6 9.4 Z" fill="#f6d2a6" stroke="#e0a880" stroke-width="0.6"/></svg>
<svg style="left:584px;top:230px" width="11" height="16" viewBox="0 0 11 16"><circle cx="3.6" cy="2.2" r="2.4" fill="#ffe400"/><rect x="4.2" y="4.6" width="1.8" height="2.4" fill="#4a3a30"/><circle cx="5.1" cy="11.2" r="4.9" fill="#1b1b1b"/></svg>
<svg style="left:519px;top:253px" width="15" height="14" viewBox="0 0 15 14"><rect x="0.5" y="4.9" width="9.4" height="8.4" fill="#e6e6e6" stroke="#a8a8a8" stroke-width="1"/><defs><linearGradient id="gz" x1="0" y1="0" x2="0" y2="1"><stop offset="0" stop-color="#6fb8f0"/><stop offset="1" stop-color="#dff0ff"/></linearGradient></defs><rect x="4.5" y="0.5" width="9.5" height="8.6" fill="url(#gz)" stroke="#2a6cc0" stroke-width="1"/></svg>
<svg style="left:669px;top:252px" width="11" height="16" viewBox="0 0 11 16"><circle cx="3.6" cy="2.2" r="2.4" fill="#ffe400"/><rect x="4.2" y="4.6" width="1.8" height="2.4" fill="#4a3a30"/><circle cx="5.1" cy="11.2" r="4.9" fill="#1b1b1b"/></svg>
<svg style="left:41.7px;top:329.7px" width="13" height="13" viewBox="0 0 13 13"><circle cx="6.25" cy="6.25" r="5" fill="#3aa8e8"/><circle cx="10.50" cy="8.01" r="1.75" fill="#3aa8e8"/><circle cx="8.01" cy="10.50" r="1.75" fill="#3aa8e8"/><circle cx="4.49" cy="10.50" r="1.75" fill="#3aa8e8"/><circle cx="2.00" cy="8.01" r="1.75" fill="#3aa8e8"/><circle cx="2.00" cy="4.49" r="1.75" fill="#3aa8e8"/><circle cx="4.49" cy="2.00" r="1.75" fill="#3aa8e8"/><circle cx="8.01" cy="2.00" r="1.75" fill="#3aa8e8"/><circle cx="10.50" cy="4.49" r="1.75" fill="#3aa8e8"/><path d="M8.9 4.6 L6.25 3.1 L3.6 4.6 V7.9 L6.25 9.4 L8.9 7.9 V6.4 H6.6" fill="none" stroke="#2a2e96" stroke-width="1.5"/></svg>
<svg style="left:59px;top:328px" width="12" height="16" viewBox="0 0 12 16"><path d="M0.2 4 C0.2 0.2 11.8 0.2 11.8 4 V14.4 C11.8 16 0.2 16 0.2 14.4 Z" fill="#fbdc00"/><path d="M0.6 14.4 H11.4 V14.8 C11.4 15.8 0.6 15.8 0.6 14.8 Z" fill="#8a6a30"/><rect x="3.4" y="2.8" width="2" height="1" fill="#a87a10"/><rect x="6.8" y="2.8" width="2" height="1" fill="#a87a10"/><circle cx="4.4" cy="5.2" r="0.6" fill="#8a8aa8"/><circle cx="7.8" cy="5.2" r="0.6" fill="#8a8aa8"/><path d="M3.4 7.2 C4.4 9.8 7.8 9.8 8.8 7.2 Z" fill="#c83a30"/></svg>
<svg style="left:519.5px;top:332.3px" width="13" height="8" viewBox="0 0 13 8"><rect x="0" y="0" width="12.5" height="8" fill="#a07060"/><rect x="0" y="0" width="1.2" height="8" fill="#4a2a20"/><rect x="11.3" y="0" width="1.2" height="8" fill="#4a2a20"/><rect x="3.5" y="0" width="0.9" height="8" fill="#7a4a3a"/><rect x="7.8" y="0" width="0.9" height="8" fill="#7a4a3a"/><rect x="0" y="0" width="12.5" height="1" fill="#5a3a30"/><rect x="0" y="7" width="12.5" height="1" fill="#6a4a40"/></svg>
<svg style="left:641.8px;top:333.5px" width="15" height="5" viewBox="0 0 15 5"><path d="M2 4.2 L0.2 1.8 C-0.2 0.4 1.4 -0.2 2 1 C2.6 -0.2 4.2 0.4 3.8 1.8 Z" fill="#ffe21a"/><path d="M7 4.2 L5.2 1.8 C4.8 0.4 6.4 -0.2 7 1 C7.6 -0.2 9.2 0.4 8.8 1.8 Z" fill="#ffe21a"/><path d="M12 4.2 L10.2 1.8 C9.8 0.4 11.4 -0.2 12 1 C12.6 -0.2 14.2 0.4 13.8 1.8 Z" fill="#ffe21a"/></svg>
<svg style="left:519.8px;top:351.8px" width="13" height="13" viewBox="0 0 13 13"><circle cx="6.25" cy="6.25" r="5" fill="#3aa8e8"/><circle cx="10.50" cy="8.01" r="1.75" fill="#3aa8e8"/><circle cx="8.01" cy="10.50" r="1.75" fill="#3aa8e8"/><circle cx="4.49" cy="10.50" r="1.75" fill="#3aa8e8"/><circle cx="2.00" cy="8.01" r="1.75" fill="#3aa8e8"/><circle cx="2.00" cy="4.49" r="1.75" fill="#3aa8e8"/><circle cx="4.49" cy="2.00" r="1.75" fill="#3aa8e8"/><circle cx="8.01" cy="2.00" r="1.75" fill="#3aa8e8"/><circle cx="10.50" cy="4.49" r="1.75" fill="#3aa8e8"/><path d="M8.9 4.6 L6.25 3.1 L3.6 4.6 V7.9 L6.25 9.4 L8.9 7.9 V6.4 H6.6" fill="none" stroke="#2a2e96" stroke-width="1.5"/></svg>
<svg style="left:574.5px;top:350px" width="12" height="16" viewBox="0 0 12 16"><path d="M0.2 4 C0.2 0.2 11.8 0.2 11.8 4 V14.4 C11.8 16 0.2 16 0.2 14.4 Z" fill="#fbdc00"/><path d="M0.6 14.4 H11.4 V14.8 C11.4 15.8 0.6 15.8 0.6 14.8 Z" fill="#8a6a30"/><rect x="3.4" y="2.8" width="2" height="1" fill="#a87a10"/><rect x="6.8" y="2.8" width="2" height="1" fill="#a87a10"/><circle cx="4.4" cy="5.2" r="0.6" fill="#8a8aa8"/><circle cx="7.8" cy="5.2" r="0.6" fill="#8a8aa8"/><path d="M3.4 7.2 C4.4 9.8 7.8 9.8 8.8 7.2 Z" fill="#c83a30"/></svg>
<svg style="left:41.7px;top:394.7px" width="13" height="13" viewBox="0 0 13 13"><circle cx="6.25" cy="6.25" r="5" fill="#3aa8e8"/><circle cx="10.50" cy="8.01" r="1.75" fill="#3aa8e8"/><circle cx="8.01" cy="10.50" r="1.75" fill="#3aa8e8"/><circle cx="4.49" cy="10.50" r="1.75" fill="#3aa8e8"/><circle cx="2.00" cy="8.01" r="1.75" fill="#3aa8e8"/><circle cx="2.00" cy="4.49" r="1.75" fill="#3aa8e8"/><circle cx="4.49" cy="2.00" r="1.75" fill="#3aa8e8"/><circle cx="8.01" cy="2.00" r="1.75" fill="#3aa8e8"/><circle cx="10.50" cy="4.49" r="1.75" fill="#3aa8e8"/><path d="M8.9 4.6 L6.25 3.1 L3.6 4.6 V7.9 L6.25 9.4 L8.9 7.9 V6.4 H6.6" fill="none" stroke="#2a2e96" stroke-width="1.5"/></svg>
<svg style="left:59px;top:393px" width="12" height="16" viewBox="0 0 12 16"><path d="M0.2 4 C0.2 0.2 11.8 0.2 11.8 4 V14.4 C11.8 16 0.2 16 0.2 14.4 Z" fill="#fbdc00"/><path d="M0.6 14.4 H11.4 V14.8 C11.4 15.8 0.6 15.8 0.6 14.8 Z" fill="#8a6a30"/><rect x="3.4" y="2.8" width="2" height="1" fill="#a87a10"/><rect x="6.8" y="2.8" width="2" height="1" fill="#a87a10"/><circle cx="4.4" cy="5.2" r="0.6" fill="#8a8aa8"/><circle cx="7.8" cy="5.2" r="0.6" fill="#8a8aa8"/><path d="M3.4 7.2 C4.4 9.8 7.8 9.8 8.8 7.2 Z" fill="#c83a30"/></svg>
<svg style="left:519.5px;top:397.3px" width="13" height="8" viewBox="0 0 13 8"><rect x="0" y="0" width="12.5" height="8" fill="#a07060"/><rect x="0" y="0" width="1.2" height="8" fill="#4a2a20"/><rect x="11.3" y="0" width="1.2" height="8" fill="#4a2a20"/><rect x="3.5" y="0" width="0.9" height="8" fill="#7a4a3a"/><rect x="7.8" y="0" width="0.9" height="8" fill="#7a4a3a"/><rect x="0" y="0" width="12.5" height="1" fill="#5a3a30"/><rect x="0" y="7" width="12.5" height="1" fill="#6a4a40"/></svg>
<svg style="left:641.8px;top:398.5px" width="15" height="5" viewBox="0 0 15 5"><path d="M2 4.2 L0.2 1.8 C-0.2 0.4 1.4 -0.2 2 1 C2.6 -0.2 4.2 0.4 3.8 1.8 Z" fill="#ffe21a"/><path d="M7 4.2 L5.2 1.8 C4.8 0.4 6.4 -0.2 7 1 C7.6 -0.2 9.2 0.4 8.8 1.8 Z" fill="#ffe21a"/><path d="M12 4.2 L10.2 1.8 C9.8 0.4 11.4 -0.2 12 1 C12.6 -0.2 14.2 0.4 13.8 1.8 Z" fill="#ffe21a"/></svg>
<svg style="left:519.5px;top:419.3px" width="13" height="8" viewBox="0 0 13 8"><rect x="0" y="0" width="12.5" height="8" fill="#a07060"/><rect x="0" y="0" width="1.2" height="8" fill="#4a2a20"/><rect x="11.3" y="0" width="1.2" height="8" fill="#4a2a20"/><rect x="3.5" y="0" width="0.9" height="8" fill="#7a4a3a"/><rect x="7.8" y="0" width="0.9" height="8" fill="#7a4a3a"/><rect x="0" y="0" width="12.5" height="1" fill="#5a3a30"/><rect x="0" y="7" width="12.5" height="1" fill="#6a4a40"/></svg>
<svg style="left:643px;top:415px" width="12" height="16" viewBox="0 0 12 16"><path d="M0.2 4 C0.2 0.2 11.8 0.2 11.8 4 V14.4 C11.8 16 0.2 16 0.2 14.4 Z" fill="#fbdc00"/><path d="M0.6 14.4 H11.4 V14.8 C11.4 15.8 0.6 15.8 0.6 14.8 Z" fill="#8a6a30"/><rect x="3.4" y="2.8" width="2" height="1" fill="#a87a10"/><rect x="6.8" y="2.8" width="2" height="1" fill="#a87a10"/><circle cx="4.4" cy="5.2" r="0.6" fill="#8a8aa8"/><circle cx="7.8" cy="5.2" r="0.6" fill="#8a8aa8"/><path d="M3.4 7.2 C4.4 9.8 7.8 9.8 8.8 7.2 Z" fill="#c83a30"/></svg>
<svg style="left:519.8px;top:439.1px" width="13" height="12" viewBox="0 0 13 12"><path d="M1.6 1.6 L11.2 10.4 M11.2 1.6 L1.6 10.4" stroke="#5a1c12" stroke-width="3.6" stroke-linecap="round"/><path d="M1.6 1.6 L11.2 10.4 M11.2 1.6 L1.6 10.4" stroke="#d8442a" stroke-width="2.3" stroke-linecap="round"/></svg>
<svg style="left:519.8px;top:461.1px" width="13" height="12" viewBox="0 0 13 12"><path d="M1.6 1.6 L11.2 10.4 M11.2 1.6 L1.6 10.4" stroke="#5a1c12" stroke-width="3.6" stroke-linecap="round"/><path d="M1.6 1.6 L11.2 10.4 M11.2 1.6 L1.6 10.4" stroke="#d8442a" stroke-width="2.3" stroke-linecap="round"/></svg>
<svg style="left:623.5px;top:459px" width="11" height="16" viewBox="0 0 11 16"><circle cx="3.6" cy="2.2" r="2.4" fill="#ffe400"/><rect x="4.2" y="4.6" width="1.8" height="2.4" fill="#4a3a30"/><circle cx="5.1" cy="11.2" r="4.9" fill="#1b1b1b"/></svg>
<svg style="left:519px;top:482.3px" width="11" height="14" viewBox="0 0 11 14"><path d="M0.3 0.6 H8.6 L4.4 12.6 H0.5 Z" fill="#9cc8ec"/><path d="M0.3 0.6 H8.6 L7.4 4 H0.4 Z" fill="#c8e2f6"/><path d="M0.5 11.4 H4.6 L4.4 12.6 H0.5 Z" fill="#3a78c0"/><path d="M9.3 0.3 L3.7 13.6" stroke="#151515" stroke-width="1.5"/></svg>
<svg style="left:616px;top:486.5px" width="14" height="6" viewBox="0 0 14 6"><path d="M0 0.6 L2.4 0.2 L3.4 1 H13.2 L13.8 5.2 H3.2 L2.2 4.2 Z" fill="#d4aa3a"/><path d="M0 0.6 L2.4 0.2 L3.4 1 L3.2 5.2 L2.2 4.2 Z" fill="#a07820"/><rect x="4.4" y="2" width="1.6" height="2" fill="#8a6a18"/><rect x="6.8" y="2" width="1.6" height="2" fill="#8a6a18"/><rect x="9.2" y="2" width="1.6" height="2" fill="#8a6a18"/><rect x="11.6" y="2" width="1.2" height="2" fill="#8a6a18"/></svg>
<svg style="left:519px;top:504.3px" width="11" height="14" viewBox="0 0 11 14"><path d="M0.3 0.6 H8.6 L4.4 12.6 H0.5 Z" fill="#9cc8ec"/><path d="M0.3 0.6 H8.6 L7.4 4 H0.4 Z" fill="#c8e2f6"/><path d="M0.5 11.4 H4.6 L4.4 12.6 H0.5 Z" fill="#3a78c0"/><path d="M9.3 0.3 L3.7 13.6" stroke="#151515" stroke-width="1.5"/></svg>
<svg style="left:616px;top:504px" width="14" height="14" viewBox="0 0 14 14"><circle cx="7" cy="7" r="6.9" fill="#fcd20c"/><circle cx="7" cy="7" r="5.6" fill="#ffde1c"/><circle cx="7" cy="7" r="2.6" fill="none" stroke="#f6e890" stroke-width="1"/></svg>
<svg style="left:519px;top:526.3px" width="11" height="14" viewBox="0 0 11 14"><path d="M0.3 0.6 H8.6 L4.4 12.6 H0.5 Z" fill="#9cc8ec"/><path d="M0.3 0.6 H8.6 L7.4 4 H0.4 Z" fill="#c8e2f6"/><path d="M0.5 11.4 H4.6 L4.4 12.6 H0.5 Z" fill="#3a78c0"/><path d="M9.3 0.3 L3.7 13.6" stroke="#151515" stroke-width="1.5"/></svg>
<svg style="left:616px;top:526px" width="14" height="14" viewBox="0 0 14 14"><circle cx="7" cy="7" r="6.9" fill="#fcd20c"/><circle cx="7" cy="7" r="5.6" fill="#ffde1c"/><path d="M4.6 9.6 V7 L7 4.8 L9.4 7 V9.6 Z" fill="#f6eaa0"/><rect x="6.3" y="7.6" width="1.4" height="2" fill="#f0c800"/></svg>
<svg style="left:41px;top:623px" width="14" height="14" viewBox="0 0 14 14"><defs><radialGradient id="gg" cx="0.5" cy="0.3" r="0.7"><stop offset="0" stop-color="#9ad0ff"/><stop offset="0.45" stop-color="#2a6ad0"/><stop offset="0.8" stop-color="#0a1a80"/><stop offset="1" stop-color="#3a70d0"/></radialGradient></defs><circle cx="7" cy="7" r="7" fill="url(#gg)"/><path d="M5 3.8 L10.4 7.2 L5 10.6 Z" fill="#f4f4f4"/></svg>
<svg style="left:519px;top:623.3px" width="11" height="14" viewBox="0 0 11 14"><path d="M0.3 0.6 H8.6 L4.4 12.6 H0.5 Z" fill="#9cc8ec"/><path d="M0.3 0.6 H8.6 L7.4 4 H0.4 Z" fill="#c8e2f6"/><path d="M0.5 11.4 H4.6 L4.4 12.6 H0.5 Z" fill="#3a78c0"/><path d="M9.3 0.3 L3.7 13.6" stroke="#151515" stroke-width="1.5"/></svg>
<svg style="left:635.5px;top:627.5px" width="14" height="6" viewBox="0 0 14 6"><path d="M0 0.6 L2.4 0.2 L3.4 1 H13.2 L13.8 5.2 H3.2 L2.2 4.2 Z" fill="#d4aa3a"/><path d="M0 0.6 L2.4 0.2 L3.4 1 L3.2 5.2 L2.2 4.2 Z" fill="#a07820"/><rect x="4.4" y="2" width="1.6" height="2" fill="#8a6a18"/><rect x="6.8" y="2" width="1.6" height="2" fill="#8a6a18"/><rect x="9.2" y="2" width="1.6" height="2" fill="#8a6a18"/><rect x="11.6" y="2" width="1.2" height="2" fill="#8a6a18"/></svg>
<svg style="left:519px;top:645.3px" width="11" height="14" viewBox="0 0 11 14"><path d="M0.3 0.6 H8.6 L4.4 12.6 H0.5 Z" fill="#9cc8ec"/><path d="M0.3 0.6 H8.6 L7.4 4 H0.4 Z" fill="#c8e2f6"/><path d="M0.5 11.4 H4.6 L4.4 12.6 H0.5 Z" fill="#3a78c0"/><path d="M9.3 0.3 L3.7 13.6" stroke="#151515" stroke-width="1.5"/></svg>
<svg style="left:635px;top:645px" width="14" height="14" viewBox="0 0 14 14"><circle cx="7" cy="7" r="6.9" fill="#fcd20c"/><circle cx="7" cy="7" r="5.6" fill="#ffde1c"/><circle cx="7" cy="7" r="2.6" fill="none" stroke="#f6e890" stroke-width="1"/></svg>
<svg style="left:519px;top:667.3px" width="11" height="14" viewBox="0 0 11 14"><path d="M0.3 0.6 H8.6 L4.4 12.6 H0.5 Z" fill="#9cc8ec"/><path d="M0.3 0.6 H8.6 L7.4 4 H0.4 Z" fill="#c8e2f6"/><path d="M0.5 11.4 H4.6 L4.4 12.6 H0.5 Z" fill="#3a78c0"/><path d="M9.3 0.3 L3.7 13.6" stroke="#151515" stroke-width="1.5"/></svg>
<svg style="left:635px;top:667px" width="14" height="14" viewBox="0 0 14 14"><circle cx="7" cy="7" r="6.9" fill="#fcd20c"/><circle cx="7" cy="7" r="5.6" fill="#ffde1c"/><path d="M4.6 9.6 V7 L7 4.8 L9.4 7 V9.6 Z" fill="#f6eaa0"/><rect x="6.3" y="7.6" width="1.4" height="2" fill="#f0c800"/></svg>

<!-- scrollbar -->
<div class="a" style="left:1351px;top:119px;width:17px;height:586px;background:#f0f0f0"></div>
<div class="a" style="left:1353px;top:453px;width:13px;height:236px;background:#c1c1c1"></div>
<svg style="left:1356px;top:125.5px" width="7" height="5" viewBox="0 0 7 5"><path d="M0 4.5 L3.5 0.5 L7 4.5 Z" fill="#474747"/></svg>
<svg style="left:1356px;top:695px" width="7" height="5" viewBox="0 0 7 5"><path d="M0 0.5 L3.5 4.5 L7 0.5 Z" fill="#8a8a8a"/></svg>

<!-- left window border -->
<div class="a" style="left:0;top:0;width:1px;height:705px;background:#4a4a4a"></div>
<div class="a" style="left:1px;top:0;width:1px;height:705px;background:#1c1c1c"></div>
<div class="a" style="left:2px;top:23px;width:1px;height:682px;background:#fff"></div>

<!-- red highlight on sub-event -->
<div class="a" style="left:42px;top:555px;width:123px;height:36px;border:2px solid #e0282a"></div>

<span class="t" style="left:8.00px;top:26.84px;font-size:12px;color:#000;letter-spacing:-0.281px">File</span>
<span class="t" style="left:37.80px;top:26.84px;font-size:12px;color:#000;letter-spacing:0.004px">Edit</span>
<span class="t" style="left:70.50px;top:26.84px;font-size:12px;color:#000;letter-spacing:0.234px">View</span>
<span class="t" style="left:108.50px;top:26.84px;font-size:12px;color:#000;letter-spacing:0.423px">Window</span>
<span class="t" style="left:164.50px;top:26.84px;font-size:12px;color:#000;letter-spacing:0.204px">Help</span>
<span class="t" style="left:842.50px;top:3.70px;font-size:15px;color:#000;letter-spacing:-0.339px">game.json.autosave</span>
<span class="t" style="left:12.00px;top:96.30px;font-size:15px;color:#6d6d6d;letter-spacing:-0.321px">Start Page</span>
<span class="t" style="left:100.20px;top:96.30px;font-size:15px;color:#6d6d6d;letter-spacing:-0.781px">Level1</span>
<span class="t" style="left:187.80px;top:96.30px;font-size:15px;color:#ffffff;letter-spacing:-0.516px">Level1 (Events)</span>
<span class="t" style="left:330.90px;top:96.30px;font-size:15px;color:#6d6d6d;letter-spacing:0.165px">MainMenu</span>
<span class="t" style="left:448.50px;top:96.30px;font-size:15px;color:#6d6d6d;letter-spacing:-0.204px">MainMenu (Events)</span>
<span class="t g" style="left:40.50px;top:203.15px;font-size:14px;color:#1e1e1e;letter-spacing:0.077px">Move obstacle</span>
<span class="t g" style="left:40.50px;top:301.15px;font-size:14px;color:#1e1e1e;letter-spacing:-0.741px">HEALTH</span>
<span class="t g" style="left:40.50px;top:595.15px;font-size:14px;color:#1e1e1e;letter-spacing:-0.862px">GAME OVER</span>
<span class="t g" style="left:57.40px;top:133.15px;font-size:14px;color:#1e1e1e;letter-spacing:-0.066px">The timer</span>
<span class="t g" style="left:120.70px;top:133.15px;font-size:14px;color:#505050;letter-spacing:-0.048px">"ObstacleCreation"</span>
<span class="t g" style="left:241.90px;top:133.15px;font-size:14px;color:#1e1e1e;letter-spacing:0.050px">is greater than</span>
<span class="t g" style="left:335.90px;top:133.15px;font-size:14px;color:#1f8f00;letter-spacing:0.000px">5</span>
<span class="t g" style="left:348.20px;top:133.15px;font-size:14px;color:#1e1e1e;letter-spacing:-0.259px">seconds</span>
<span class="t g" style="left:39.70px;top:154.15px;font-size:14px;color:#b4b4b4;letter-spacing:0.263px">Add condition</span>
<span class="t g" style="left:534.80px;top:133.15px;font-size:14px;color:#1e1e1e;letter-spacing:-0.065px">Create object</span>
<span class="t g" style="left:637.80px;top:133.15px;font-size:14px;font-weight:700;color:#30369a;letter-spacing:-0.263px">Obstacle</span>
<span class="t g" style="left:699.50px;top:133.15px;font-size:14px;color:#1e1e1e;letter-spacing:0.237px">at position</span>
<span class="t g" style="left:770.50px;top:133.15px;font-size:14px;color:#1f8f00;letter-spacing:-0.156px">RandomInRange(80, 640-80);-100</span>
<span class="t g" style="left:534.80px;top:155.15px;font-size:14px;color:#1e1e1e;letter-spacing:-0.017px">Reset the timer</span>
<span class="t g" style="left:633.20px;top:155.15px;font-size:14px;color:#505050;letter-spacing:0.005px">"ObstacleCreation"</span>
<span class="t g" style="left:517.40px;top:176.15px;font-size:14px;color:#b4b4b4;letter-spacing:0.248px">Add action</span>
<span class="t g" style="left:39.70px;top:230.15px;font-size:14px;color:#b4b4b4;letter-spacing:0.263px">Add condition</span>
<span class="t g" style="left:535.30px;top:231.15px;font-size:14px;color:#1e1e1e;letter-spacing:0.243px">Add to</span>
<span class="t g" style="left:598.10px;top:231.15px;font-size:14px;font-weight:700;color:#30369a;letter-spacing:-0.334px">Obstacle</span>
<span class="t g" style="left:660.80px;top:231.15px;font-size:14px;color:#505050;letter-spacing:-0.002px">an instant</span>
<span class="t g" style="left:726.10px;top:231.15px;font-size:14px;color:#1e1e1e;letter-spacing:-0.155px">force, angle:</span>
<span class="t g" style="left:806.00px;top:231.15px;font-size:14px;color:#1f8f00;letter-spacing:0.622px">90</span>
<span class="t g" style="left:826.10px;top:231.15px;font-size:14px;color:#1e1e1e;letter-spacing:-0.020px">degrees and length:</span>
<span class="t g" style="left:953.50px;top:231.15px;font-size:14px;color:#1f8f00;letter-spacing:0.170px">100</span>
<span class="t g" style="left:980.80px;top:231.15px;font-size:14px;color:#1e1e1e;letter-spacing:-0.119px">pixels</span>
<span class="t g" style="left:535.30px;top:253.15px;font-size:14px;color:#1e1e1e;letter-spacing:0.294px">Do</span>
<span class="t g" style="left:558.10px;top:253.15px;font-size:14px;color:#3a8fd8;letter-spacing:0.000px">=</span>
<span class="t g" style="left:568.50px;top:253.15px;font-size:14px;color:#1f8f00;letter-spacing:0.000px">4</span>
<span class="t g" style="left:581.70px;top:253.15px;font-size:14px;color:#1e1e1e;letter-spacing:0.256px">to Z-order of</span>
<span class="t g" style="left:682.50px;top:253.15px;font-size:14px;font-weight:700;color:#30369a;letter-spacing:-0.277px">Obstacle</span>
<span class="t g" style="left:517.40px;top:274.15px;font-size:14px;color:#b4b4b4;letter-spacing:0.248px">Add action</span>
<span class="t g" style="left:74.10px;top:329.15px;font-size:14px;font-weight:700;color:#30369a;letter-spacing:0.208px">Monster</span>
<span class="t g" style="left:133.90px;top:329.15px;font-size:14px;color:#1e1e1e;letter-spacing:-0.088px">has just been damaged</span>
<span class="t g" style="left:39.70px;top:350.15px;font-size:14px;color:#b4b4b4;letter-spacing:0.263px">Add condition</span>
<span class="t g" style="left:534.50px;top:329.15px;font-size:14px;color:#1e1e1e;letter-spacing:0.135px">Set animation of</span>
<span class="t g" style="left:657.50px;top:329.15px;font-size:14px;font-weight:700;color:#30369a;letter-spacing:-0.230px">Life</span>
<span class="t g" style="left:686.10px;top:329.15px;font-size:14px;color:#1e1e1e;letter-spacing:1.500px">to</span>
<span class="t g" style="left:704.00px;top:329.15px;font-size:14px;color:#505050;letter-spacing:0.001px">"Life" + ToString(Monster.Health::Health())</span>
<span class="t g" style="left:534.50px;top:351.15px;font-size:14px;color:#1e1e1e;letter-spacing:0.289px">Make</span>
<span class="t g" style="left:590.10px;top:351.15px;font-size:14px;font-weight:700;color:#30369a;letter-spacing:0.224px">Monster</span>
<span class="t g" style="left:649.90px;top:351.15px;font-size:14px;color:#1e1e1e;letter-spacing:0.396px">blink for</span>
<span class="t g" style="left:705.80px;top:351.15px;font-size:14px;color:#1f8f00;letter-spacing:-0.484px">1.5</span>
<span class="t g" style="left:728.70px;top:351.15px;font-size:14px;color:#1e1e1e;letter-spacing:-0.293px">seconds</span>
<span class="t g" style="left:517.40px;top:372.15px;font-size:14px;color:#b4b4b4;letter-spacing:0.248px">Add action</span>
<span class="t g" style="left:74.10px;top:394.15px;font-size:14px;font-weight:700;color:#30369a;letter-spacing:0.208px">Monster</span>
<span class="t g" style="left:133.90px;top:394.15px;font-size:14px;color:#1e1e1e;letter-spacing:-0.193px">is dead</span>
<span class="t g" style="left:39.70px;top:415.15px;font-size:14px;color:#b4b4b4;letter-spacing:0.263px">Add condition</span>
<span class="t g" style="left:534.80px;top:394.15px;font-size:14px;color:#1e1e1e;letter-spacing:0.082px">Set animation of</span>
<span class="t g" style="left:657.90px;top:394.15px;font-size:14px;font-weight:700;color:#30369a;letter-spacing:-0.430px">Life</span>
<span class="t g" style="left:686.50px;top:394.15px;font-size:14px;color:#1e1e1e;letter-spacing:1.213px">to</span>
<span class="t g" style="left:703.80px;top:394.15px;font-size:14px;color:#505050;letter-spacing:0.081px">"Life0"</span>
<span class="t g" style="left:534.80px;top:416.15px;font-size:14px;color:#1e1e1e;letter-spacing:0.082px">Set animation of</span>
<span class="t g" style="left:657.90px;top:416.15px;font-size:14px;font-weight:700;color:#30369a;letter-spacing:0.108px">Monster</span>
<span class="t g" style="left:717.00px;top:416.15px;font-size:14px;color:#1e1e1e;letter-spacing:1.500px">to</span>
<span class="t g" style="left:734.50px;top:416.15px;font-size:14px;color:#505050;letter-spacing:0.168px">"MonsterDead"</span>
<span class="t g" style="left:534.80px;top:438.15px;font-size:14px;color:#1e1e1e;letter-spacing:0.115px">Delete object</span>
<span class="t g" style="left:621.80px;top:438.15px;font-size:14px;font-weight:700;color:#30369a;letter-spacing:-0.662px">Shapes</span>
<span class="t g" style="left:534.80px;top:460.15px;font-size:14px;color:#1e1e1e;letter-spacing:0.115px">Delete object</span>
<span class="t g" style="left:638.20px;top:460.15px;font-size:14px;font-weight:700;color:#30369a;letter-spacing:-0.349px">Obstacle</span>
<span class="t g" style="left:534.80px;top:482.15px;font-size:14px;color:#1e1e1e;letter-spacing:0.002px">Show object</span>
<span class="t g" style="left:631.80px;top:482.15px;font-size:14px;font-weight:700;color:#30369a;letter-spacing:-0.175px">GameOver</span>
<span class="t g" style="left:534.80px;top:504.15px;font-size:14px;color:#1e1e1e;letter-spacing:0.002px">Show object</span>
<span class="t g" style="left:631.80px;top:504.15px;font-size:14px;font-weight:700;color:#30369a;letter-spacing:-0.015px">ButtonTryAgain</span>
<span class="t g" style="left:534.80px;top:526.15px;font-size:14px;color:#1e1e1e;letter-spacing:0.002px">Show object</span>
<span class="t g" style="left:631.80px;top:526.15px;font-size:14px;font-weight:700;color:#30369a;letter-spacing:0.244px">ButtonMainMenu</span>
<span class="t g" style="left:517.40px;top:547.15px;font-size:14px;color:#b4b4b4;letter-spacing:0.248px">Add action</span>
<span class="t g" style="left:62.00px;top:568.15px;font-size:14px;color:#b4b4b4;letter-spacing:0.263px">Add condition</span>
<span class="t g" style="left:517.40px;top:568.15px;font-size:14px;color:#b4b4b4;letter-spacing:0.248px">Add action</span>
<span class="t g" style="left:56.50px;top:623.15px;font-size:14px;color:#1e1e1e;letter-spacing:0.105px">At the beginning of the scene</span>
<span class="t g" style="left:39.70px;top:644.15px;font-size:14px;color:#b4b4b4;letter-spacing:0.263px">Add condition</span>
<span class="t g" style="left:534.80px;top:623.15px;font-size:14px;color:#1e1e1e;letter-spacing:0.150px">Hide the object</span>
<span class="t g" style="left:650.70px;top:623.15px;font-size:14px;font-weight:700;color:#30369a;letter-spacing:-0.147px">GameOver</span>
<span class="t g" style="left:534.80px;top:645.15px;font-size:14px;color:#1e1e1e;letter-spacing:0.150px">Hide the object</span>
<span class="t g" style="left:650.70px;top:645.15px;font-size:14px;font-weight:700;color:#30369a;letter-spacing:0.008px">ButtonTryAgain</span>
<span class="t g" style="left:534.80px;top:667.15px;font-size:14px;color:#1e1e1e;letter-spacing:0.150px">Hide the object</span>
<span class="t g" style="left:650.70px;top:667.15px;font-size:14px;font-weight:700;color:#30369a;letter-spacing:0.267px">ButtonMainMenu</span>
<span class="t g" style="left:517.40px;top:688.15px;font-size:14px;color:#b4b4b4;letter-spacing:0.248px">Add action</span>
</body></html>
